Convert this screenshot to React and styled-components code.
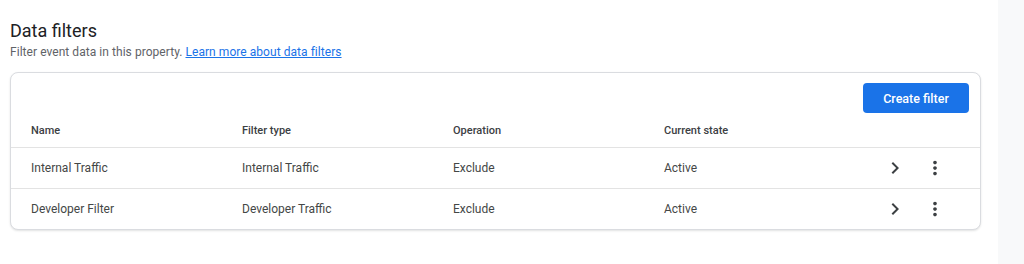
import React from "react";
import styled, { createGlobalStyle } from "styled-components";

const Global = createGlobalStyle`
  html, body { margin: 0; padding: 0; background: #ffffff; }
  body { font-family: Roboto, "Noto Sans", Arial, sans-serif; color: #3c4043; }
`;

const Page = styled.div`
  display: flex;
  width: 1024px;
  height: 264px;
  overflow: hidden;
`;

const Main = styled.main`
  flex: 0 0 998px;
  padding: 18px 17px 0 10px;
  box-sizing: border-box;
`;

const SidePanel = styled.aside`
  flex: 1;
  background: #f8f9fa;
`;

const Title = styled.h1`
  margin: 0;
  font-size: 18px;
  line-height: 26px;
  font-weight: 400;
  color: #202124;
`;

const Subtitle = styled.p`
  margin: 0 0 11px;
  font-size: 12px;
  line-height: 17px;
  letter-spacing: 0.05px;
  color: #5f6368;
`;

const Link = styled.a`
  color: #1a73e8;
  text-decoration: underline;
`;

const Card = styled.section`
  border: 1px solid #dadce0;
  border-radius: 8px;
  box-shadow: 0 1px 2px rgba(60, 64, 67, 0.15);
  background: #fff;
  overflow: hidden;
`;

const Toolbar = styled.div`
  display: flex;
  justify-content: flex-end;
  padding: 10px 11px 0 0;
`;

const PrimaryButton = styled.button`
  height: 30px;
  width: 106px;
  border: none;
  border-radius: 4px;
  background: #1a73e8;
  color: #fff;
  font-family: Roboto, Arial, sans-serif;
  font-size: 12.5px;
  font-weight: 500;
  cursor: pointer;
`;

const Row = styled.div`
  display: grid;
  grid-template-columns: 211px 211px 211px 211px 1fr;
  align-items: center;
  padding-left: 20px;
  height: ${(p) => (p.$header ? "34px" : "40px")};
  border-top: ${(p) => (p.$first ? "none" : "1px solid #e3e3e3")};
  font-size: ${(p) => (p.$header ? "11px" : "12px")};
  font-weight: ${(p) => (p.$header ? 500 : 400)};
  color: ${(p) => (p.$header ? "#3c4043" : "#444746")};
`;

const Actions = styled.div`
  display: flex;
  align-items: center;
  gap: 16px;
  padding-left: 8px;
`;

const IconButton = styled.span`
  width: 24px;
  height: 24px;
  display: flex;
  align-items: center;
  justify-content: center;
  color: #3c4043;
`;

const Chevron = () => (
  <svg width="24" height="24" viewBox="0 0 24 24" fill="currentColor">
    <path d="M10 6L8.59 7.41 13.17 12l-4.58 4.59L10 18l6-6z" />
  </svg>
);

const MoreVert = () => (
  <svg width="22" height="22" viewBox="0 0 24 24" fill="currentColor">
    <path d="M12 8c1.1 0 2-.9 2-2s-.9-2-2-2-2 .9-2 2 .9 2 2 2zm0 2c-1.1 0-2 .9-2 2s.9 2 2 2 2-.9 2-2-.9-2-2-2zm0 6c-1.1 0-2 .9-2 2s.9 2 2 2 2-.9 2-2-.9-2-2-2z" />
  </svg>
);

const rows = [
  ["Internal Traffic", "Internal Traffic", "Exclude", "Active"],
  ["Developer Filter", "Developer Traffic", "Exclude", "Active"],
];

export default function App() {
  return (
    <>
      <Global />
      <Page>
        <Main>
          <Title>Data filters</Title>
          <Subtitle>
            Filter event data in this property.{" "}
            <Link href="#">Learn more about data filters</Link>
          </Subtitle>
          <Card>
            <Toolbar>
              <PrimaryButton>Create filter</PrimaryButton>
            </Toolbar>
            <Row $header $first>
              <span>Name</span>
              <span>Filter type</span>
              <span>Operation</span>
              <span>Current state</span>
              <span />
            </Row>
            {rows.map((r) => (
              <Row key={r[0]}>
                {r.map((c, i) => (
                  <span key={i}>{c}</span>
                ))}
                <Actions>
                  <IconButton>
                    <Chevron />
                  </IconButton>
                  <IconButton>
                    <MoreVert />
                  </IconButton>
                </Actions>
              </Row>
            ))}
          </Card>
        </Main>
        <SidePanel />
      </Page>
    </>
  );
}
